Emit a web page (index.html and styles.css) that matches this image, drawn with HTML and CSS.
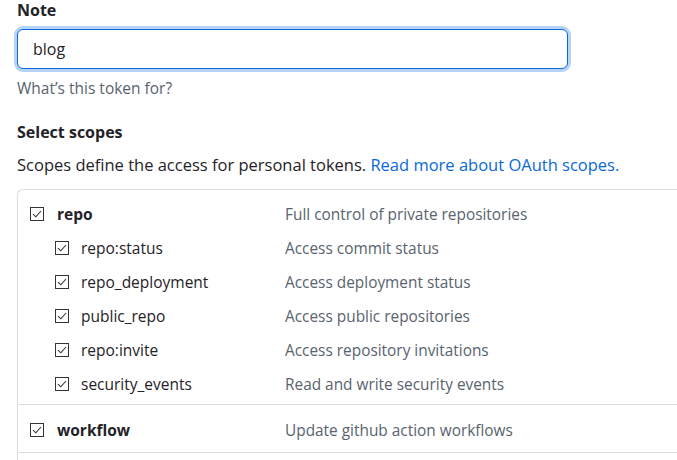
FILE: index.html
```html
<!DOCTYPE html>
<html lang="en">
<head>
<meta charset="utf-8">
<title>New personal access token</title>
<link rel="stylesheet" href="styles.css">
</head>
<body>
<div class="page">
  <label class="field-label" for="note">Note</label>
  <div class="input-wrap"><input id="note" class="text-input" type="text" value="blog"></div>
  <p class="note">What’s this token for?</p>

  <h3 class="section-title">Select scopes</h3>
  <p class="lead">Scopes define the access for personal tokens. <a href="#" class="link">Read more about OAuth scopes.</a></p>

  <div class="scopes">
    <div class="group">
      <div class="row">
        <span class="label top"><span class="cb"><svg viewBox="0 0 14 14" width="14" height="14"><rect x="0.5" y="0.5" width="13" height="13" fill="#fff" stroke="#333"/><path d="M3 7.2 L5.8 9.8 L11 4" fill="none" stroke="#333" stroke-width="1.1"/></svg></span><b>repo</b></span>
        <span class="desc">Full control of private repositories</span>
      </div>
      <div class="row">
        <span class="label sub"><span class="cb"><svg viewBox="0 0 14 14" width="14" height="14"><rect x="0.5" y="0.5" width="13" height="13" fill="#fff" stroke="#333"/><path d="M3 7.2 L5.8 9.8 L11 4" fill="none" stroke="#333" stroke-width="1.1"/></svg></span>repo:status</span>
        <span class="desc">Access commit status</span>
      </div>
      <div class="row">
        <span class="label sub"><span class="cb"><svg viewBox="0 0 14 14" width="14" height="14"><rect x="0.5" y="0.5" width="13" height="13" fill="#fff" stroke="#333"/><path d="M3 7.2 L5.8 9.8 L11 4" fill="none" stroke="#333" stroke-width="1.1"/></svg></span>repo_deployment</span>
        <span class="desc">Access deployment status</span>
      </div>
      <div class="row">
        <span class="label sub"><span class="cb"><svg viewBox="0 0 14 14" width="14" height="14"><rect x="0.5" y="0.5" width="13" height="13" fill="#fff" stroke="#333"/><path d="M3 7.2 L5.8 9.8 L11 4" fill="none" stroke="#333" stroke-width="1.1"/></svg></span>public_repo</span>
        <span class="desc">Access public repositories</span>
      </div>
      <div class="row">
        <span class="label sub"><span class="cb"><svg viewBox="0 0 14 14" width="14" height="14"><rect x="0.5" y="0.5" width="13" height="13" fill="#fff" stroke="#333"/><path d="M3 7.2 L5.8 9.8 L11 4" fill="none" stroke="#333" stroke-width="1.1"/></svg></span>repo:invite</span>
        <span class="desc">Access repository invitations</span>
      </div>
      <div class="row">
        <span class="label sub"><span class="cb"><svg viewBox="0 0 14 14" width="14" height="14"><rect x="0.5" y="0.5" width="13" height="13" fill="#fff" stroke="#333"/><path d="M3 7.2 L5.8 9.8 L11 4" fill="none" stroke="#333" stroke-width="1.1"/></svg></span>security_events</span>
        <span class="desc">Read and write security events</span>
      </div>
    </div>
    <div class="group last">
      <div class="row">
        <span class="label top"><span class="cb"><svg viewBox="0 0 14 14" width="14" height="14"><rect x="0.5" y="0.5" width="13" height="13" fill="#fff" stroke="#333"/><path d="M3 7.2 L5.8 9.8 L11 4" fill="none" stroke="#333" stroke-width="1.1"/></svg></span><b>workflow</b></span>
        <span class="desc">Update github action workflows</span>
      </div>
    </div>
    <div class="group"></div>
  </div>
</div>
</body>
</html>
```

FILE: styles.css
```css
html, body {
  margin: 0;
  padding: 0;
  background: #fff;
}
body {
  font-family: "Open Sans", "Noto Sans", sans-serif;
  color: #1f2328;
  overflow: hidden;
}
.page {
  padding: 0 0 0 17px;
  height: 460px;
  overflow: hidden;
}
.field-label {
  display: block;
  font-size: 16px;
  font-weight: 700;
  line-height: 20px;
  height: 20px;
  margin-top: 0;
}
.input-wrap {
  margin-top: 9px;
  width: 551px;
}
.text-input {
  box-sizing: border-box;
  width: 551px;
  height: 40px;
  margin: 0;
  padding: 0 15px;
  font-family: inherit;
  font-size: 16px;
  color: #1f2328;
  border: 1px solid #0969da;
  border-radius: 6px;
  box-shadow: 0 0 0 3px #b6d4f6;
  outline: none;
  background: #fff;
}
.note {
  margin: 8px 0 0;
  font-size: 15.5px;
  line-height: 22px;
  color: #59636e;
}
.section-title {
  margin: 21px 0 0;
  font-size: 16px;
  font-weight: 700;
  line-height: 24px;
}
.lead {
  margin: 9px 0 0;
  font-size: 16.5px;
  line-height: 24px;
  white-space: nowrap;
}
.link {
  color: #0969da;
  text-decoration: none;
}
.scopes {
  margin-top: 12px;
  width: 720px;
  border: 1px solid #d8dee4;
  border-right: none;
  border-radius: 6px 0 0 6px;
}
.group {
  padding: 7px 0 3px;
  border-bottom: 1px solid #d8dee4;
}
.group.last {
  padding: 8px 0 5px;
}
.row {
  display: grid;
  grid-template-columns: 267px 1fr;
  align-items: center;
  height: 34px;
  font-size: 15.5px;
}
.label {
  display: flex;
  align-items: center;
  gap: 13px;
  color: #1f2328;
}
.label.top {
  padding-left: 12px;
}
.label.sub {
  padding-left: 37px;
  gap: 12px;
}
.label b {
  font-weight: 700;
}
.cb {
  display: flex;
  width: 14px;
  height: 14px;
}
.desc {
  color: #59636e;
  font-size: 15.4px;
}
```
